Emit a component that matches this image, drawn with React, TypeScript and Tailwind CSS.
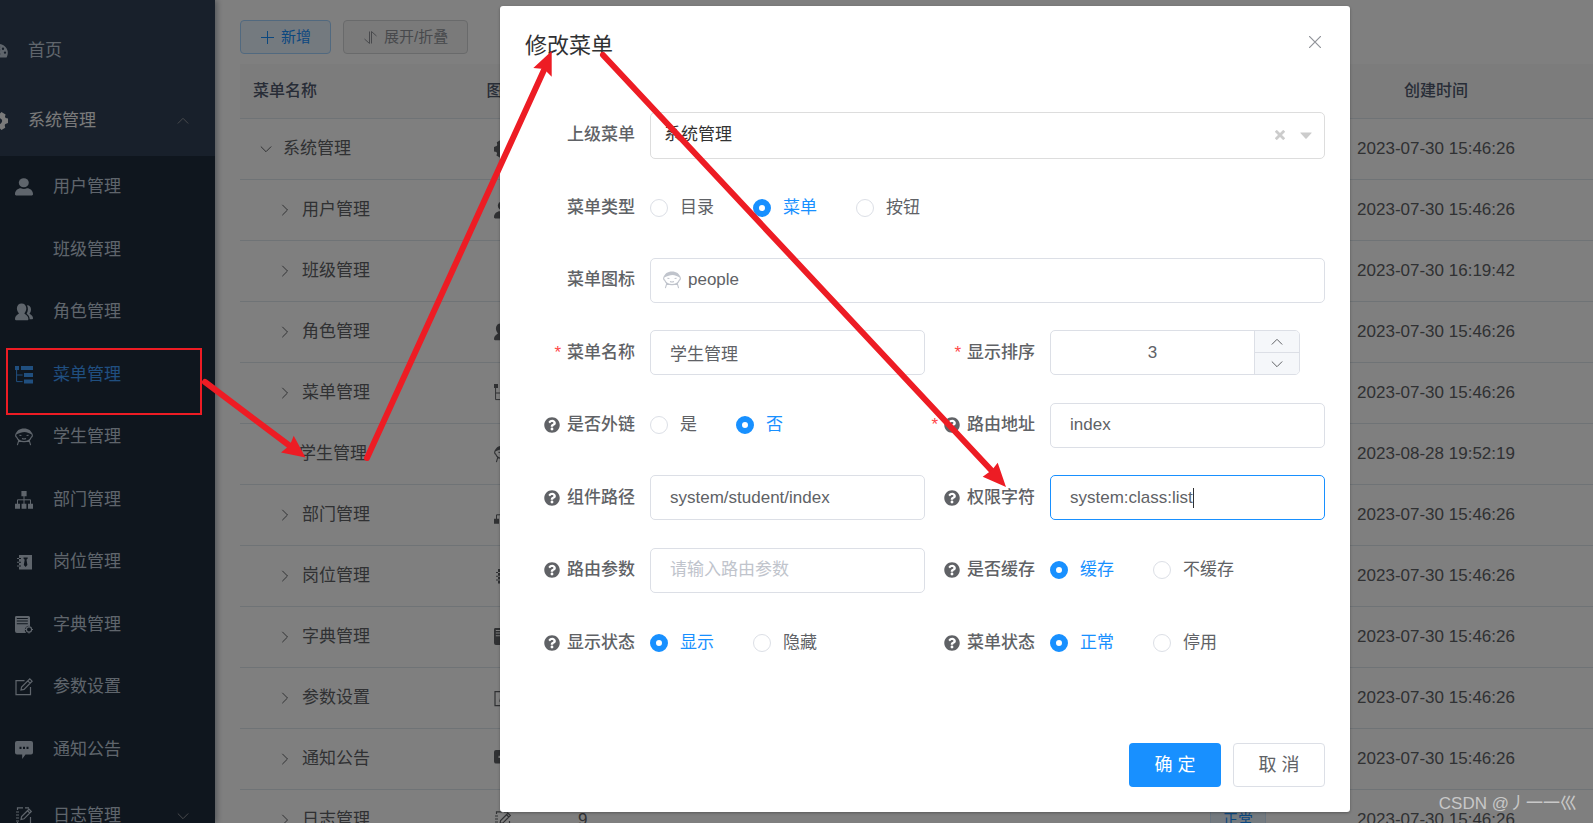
import React, { useState } from 'react';
import { FaQuestionCircle } from 'react-icons/fa';

interface IconProps {
    name: string;
}

const Icon: React.FC<IconProps> = ({ name }) => (
    <svg viewBox="0 0 18 18" className="size-[18px] shrink-0" fill="currentColor" aria-hidden="true">
        {name === 'dashboard' && (
            <path fillRule="evenodd" d="M9 2a9 9 0 0 0-7.6 13.5h15.2A9 9 0 0 0 9 2Zm0 1.8a1.2 1.2 0 1 1 0 2.4 1.2 1.2 0 0 1 0-2.4Zm4 1.8a1.2 1.2 0 1 1 0 2.4 1.2 1.2 0 0 1 0-2.4Zm-8 0A1.2 1.2 0 1 1 5 8a1.2 1.2 0 0 1 0-2.4ZM15 9.400a1.200 1.200 0 1 1 0 2.400 1.200 1.200 0 0 1 0-2.400ZM3 9.400a1.200 1.200 0 1 1 0 2.400 1.200 1.200 0 0 1 0-2.400ZM10.500 7l-1 3.600a1.800 1.800 0 1 1-1-.3Z" />
        )}
        {name === 'system' && (
            <path transform="rotate(30 9 9)" fillRule="evenodd" d="M6.600 0h4.800l.6 2.300 1.300.8 2.300-.7 2.200 3.800L16 8.300v1.400l1.800 2.100-2.200 3.800-2.300-.7-1.300.8-.6 2.300H6.600L6 15.700l-1.300-.8-2.300.7-2.200-3.800L2 9.700V8.300L.2 6.200l2.200-3.800 2.300.7L6 2.300ZM9 6a3 3 0 1 0 0 6 3 3 0 0 0 0-6Z" />
        )}
        {name === 'user' && (
            <>
                <ellipse cx="8.800" cy="4.700" rx="5" ry="4.500" />
                <path d="M0 16c0-3.600 3-5.800 5.800-5.800 1.900 1 4.300 1 6.200 0 3 0 6 2.200 6 5.800 0 1-.4 1.400-1.200 1.400H1.200C.4 17.400 0 17 0 16Z" />
            </>
        )}
        {name === 'peoples' && (
            <>
                <path d="M6.600.4c2.700 0 4.700 2 4.700 4.900 0 2-.8 3.900-1.900 4.900 0 1.200 3.800 1.500 4 5.800 0 .9-.4 1.300-1.200 1.300H1c-.7 0-1-.4-1-1.200.2-4.400 3.800-4.700 3.900-5.900-1.200-1-2-2.900-2-4.900C1.900 2.400 3.900.4 6.600.4Z" />
                <path d="M12 2.300c2.400-.2 4 1.700 4 4.300 0 1.800-.7 3.200-1.500 4 0 .8 3.400 1.400 3.500 4.700 0 .7-.3 1-.9 1h-2.400c-.2-3-1.500-4.300-3.100-5.500 1.500-2.400 1.900-5.800.4-8.500Z" />
            </>
        )}
        {name === 'tree-table' && (
            <>
                <path d="M0 0h4v4H0zM6 0h12v4H6zM9 7h9v4H9zM9 13.500h9v4H9z" />
                <path d="M1.600 4v11.600h6M1.600 9h6" fill="none" stroke="currentColor" strokeWidth="1" />
            </>
        )}
        {name === 'people' && (
            <>
                <path d="M1 6.500C1.200 2.600 4.600.4 9 .4s7.800 2.200 8 6.100C13.500 5 12 4 9.500 4S4.500 5 1 6.500Z" />
                <path d="M2.500 4.500C.2 5.500.2 8.500 1.700 9.200 3 12.400 5.600 13.600 9 13.600s6-1.200 7.300-4.400c1.500-.7 1.500-3.700-.8-4.700M3.700 12.700l-1.300 4.500M14.300 12.700l1.300 4.500M4.400 7.200l2 .3M11.600 7.500l2-.3M7 10.600q2 .9 4 0" fill="none" stroke="currentColor" strokeWidth="1.100" />
            </>
        )}
        {name === 'tree' && (
            <>
                <path d="M6.400 0h5.200v5.200H6.400zM0 12.800h5v5H0zM6.600 12.800h4.800v5H6.600zM13 12.800h5v5h-5z" />
                <path d="M9 5v8M2.500 13V8.800h13V13" fill="none" stroke="currentColor" strokeWidth="1" />
            </>
        )}
        {name === 'post' && (
            <>
                <path fillRule="evenodd" d="M4 2h13v14.500H4V13.500h2v-1H4V9.700h2v-1H4V6h2V5H4ZM8.500 4.500v1l1.200 1.300-.9 5.200 1.800 2 1.800-2-.9-5.200 1.200-1.300v-1Z" />
                <path d="M2 5h2v1H2zM2 8.700h2v1H2zM2 12.500h2v1H2z" />
            </>
        )}
        {name === 'dict' && (
            <>
                <path fillRule="evenodd" d="M1 0h12.500q1.500 0 1.500 1.500V10a4 4 0 0 0-4.500 6L11 17H2q-2 0-2-2V1.500Q0 0 1 0Zm.8 2v1h11V2Zm0 2.600v1h11v-1Zm0 2.600v1h11v-1Z" />
                <circle cx="14" cy="13.500" r="2.600" fill="none" stroke="currentColor" strokeWidth="1.200" />
                <path d="M13.500 9.600h1v1.500h-1zM13.500 16h1v1.500h-1zM9.800 13h1.600v1H9.800zM16.600 13H18v1h-1.400z" />
            </>
        )}
        {name === 'edit' && (
            <path d="M9.500 2.600H1v14h14.500V9M6 12l.6-3L14.800.9l2.300 2.300L9 11.400 6 12ZM12.800 2.900l2.300 2.300" fill="none" stroke="currentColor" strokeWidth="1.200" />
        )}
        {name === 'message' && (
            <path fillRule="evenodd" d="M2 0h14q2 0 2 2v9.500q0 2-2 2h-5.500L7.200 18v-4.500H2q-2 0-2-2V2Q0 0 2 0Zm2.500 5.800v2.100h2V5.800Zm3.500 0v2.100h2V5.800Zm3.500 0v2.100h2V5.800Z" />
        )}
        {name === 'log' && (
            <path d="M8 .8H2.500V3M2.500 15v2h8M10 .8h4M15.500 10v7h-2M1 5h3M1 8h3M1 11h3M1 14h3M6 12.500l.6-3L14 2.200l2.300 2.300L9 11.800l-3 .7ZM12.500 3.700l2.300 2.300" fill="none" stroke="currentColor" strokeWidth="1.200" />
        )}
    </svg>
);

const Chevron: React.FC<{ dir: 'up' | 'down' | 'right' }> = ({ dir }) => (
    <svg viewBox="0 0 12 12" className="size-3 shrink-0" fill="none" stroke="currentColor" strokeWidth="1" aria-hidden="true">
        {dir === 'up' && <path d="M.8 8.500 6 3.300l5.200 5.200" />}
        {dir === 'down' && <path d="M.8 3.500 6 8.700l5.200-5.200" />}
        {dir === 'right' && <path d="M3.300.8 8.500 6l-5.200 5.200" />}
    </svg>
);

const subMenu = [
    { title: '用户管理', icon: 'user' },
    { title: '班级管理', icon: '' },
    { title: '角色管理', icon: 'peoples' },
    { title: '菜单管理', icon: 'tree-table' },
    { title: '学生管理', icon: 'people' },
    { title: '部门管理', icon: 'tree' },
    { title: '岗位管理', icon: 'post' },
    { title: '字典管理', icon: 'dict' },
    { title: '参数设置', icon: 'edit' },
    { title: '通知公告', icon: 'message' },
];

interface MenuRow {
    title: string;
    icon: string;
    sort?: number;
    status?: string;
    time: string;
}

const rows: MenuRow[] = [
    { title: '系统管理', icon: 'system', time: '2023-07-30 15:46:26' },
    { title: '用户管理', icon: 'user', time: '2023-07-30 15:46:26' },
    { title: '班级管理', icon: '', time: '2023-07-30 16:19:42' },
    { title: '角色管理', icon: 'peoples', time: '2023-07-30 15:46:26' },
    { title: '菜单管理', icon: 'tree-table', time: '2023-07-30 15:46:26' },
    { title: '学生管理', icon: 'people', time: '2023-08-28 19:52:19' },
    { title: '部门管理', icon: 'tree', time: '2023-07-30 15:46:26' },
    { title: '岗位管理', icon: 'post', time: '2023-07-30 15:46:26' },
    { title: '字典管理', icon: 'dict', time: '2023-07-30 15:46:26' },
    { title: '参数设置', icon: 'edit', time: '2023-07-30 15:46:26' },
    { title: '通知公告', icon: 'message', time: '2023-07-30 15:46:26' },
    { title: '日志管理', icon: 'log', sort: 9, status: '正常', time: '2023-07-30 15:46:26' },
];

const Sidebar = () => (
    <nav className="z-10 w-[215px] shrink-0 overflow-hidden bg-[#304156] pt-4 text-[#bfcbd9] shadow-[2px_0_6px_rgba(0,21,41,0.35)]">
        <a href="#" className="-ml-[10px] flex h-[70px] items-center gap-5">
            <Icon name="dashboard" />
            首页
        </a>
        <a href="#" className="-ml-[10px] flex h-[70px] items-center gap-5 pr-[26px] text-[#f4f4f5]">
            <Icon name="system" />
            <span className="flex-1">系统管理</span>
            <span className="text-[#909399]"><Chevron dir="up" /></span>
        </a>
        <div className="bg-[#1f2d3d]">
            <div className="grid h-[625px] grid-rows-10">
                {subMenu.map(item => (
                    <a
                        key={item.title}
                        href="#"
                        className={`flex items-center gap-5 pl-[15px] ${item.title === '菜单管理' ? 'text-[#409eff]' : ''}`}
                    >
                        <Icon name={item.icon} />
                        {item.title}
                    </a>
                ))}
            </div>
            <a href="#" className="flex h-[70px] items-center gap-5 pl-[15px] pr-[26px]">
                <Icon name="log" />
                <span className="flex-1">日志管理</span>
                <span className="text-[#909399]"><Chevron dir="down" /></span>
            </a>
        </div>
    </nav>
);

const MenuTable = () => (
    <table className="w-full min-w-[1500px] table-fixed border-separate border-spacing-0">
        <colgroup>
            <col className="w-[200px]" />
            <col className="w-[125px]" />
            <col className="w-[75px]" />
            <col className="w-[557px]" />
            <col className="w-[100px]" />
            <col className="w-[278px]" />
            <col />
        </colgroup>
        <thead>
            <tr className="h-[55px] bg-[#f8f8f9] text-base text-[#515a6e]">
                <th className="border-b border-[#dfe6ec] pl-[13px] text-left font-medium">菜单名称</th>
                <th className="border-b border-[#dfe6ec] font-medium">图标</th>
                <th className="border-b border-[#dfe6ec]" />
                <th className="border-b border-[#dfe6ec]" />
                <th className="border-b border-[#dfe6ec]" />
                <th className="border-b border-[#dfe6ec] font-medium">创建时间</th>
                <th className="border-b border-[#dfe6ec]" />
            </tr>
        </thead>
        <tbody>
            {rows.map((row, i) => (
                <tr key={row.title} className="h-[61px]">
                    <td className="border-b border-[#dfe6ec]">
                        <div className={`flex items-center ${i === 0 ? 'pl-[20px]' : 'pl-[39px]'}`}>
                            {row.title === '学生管理' ? <span className="w-5" /> : <span className="w-[23px]"><Chevron dir={i === 0 ? 'down' : 'right'} /></span>}
                            {row.title}
                        </div>
                    </td>
                    <td className="border-b border-[#dfe6ec]">
                        <div className="flex justify-center"><Icon name={row.icon} /></div>
                    </td>
                    <td className="border-b border-[#dfe6ec] pl-[13px]">{row.sort}</td>
                    <td className="border-b border-[#dfe6ec]" />
                    <td className="border-b border-[#dfe6ec] pl-[13px]">
                        {row.status && (
                            <span className="inline-flex h-[30px] items-center rounded border border-[#d1e9ff] bg-[#e8f4ff] px-3 text-[15px] text-[#1890ff]">{row.status}</span>
                        )}
                    </td>
                    <td className="border-b border-[#dfe6ec] text-center">{row.time}</td>
                    <td className="border-b border-[#dfe6ec]" />
                </tr>
            ))}
        </tbody>
    </table>
);

interface FieldProps {
    label: string;
    htmlFor?: string;
    required?: boolean;
    help?: boolean;
    wide?: boolean;
    children: React.ReactNode;
}

const Field: React.FC<FieldProps> = ({ label, htmlFor, required, help, wide, children }) => (
    <div className={`flex items-center ${wide ? 'col-span-2' : ''}`}>
        <label htmlFor={htmlFor} className="flex w-[125px] shrink-0 items-center justify-end pr-[15px] font-medium">
            {required && <span className="mr-[6px] text-[#ff4949]">*</span>}
            {help && <FaQuestionCircle className="mr-[7px] size-4" />}
            {label}
        </label>
        {children}
    </div>
);

const RadioGroup: React.FC<{ name: string; options: string[]; initial: string }> = ({ name, options, initial }) => {
    const [value, setValue] = useState(initial);

    return (
        <div role="radiogroup" className="flex gap-[39px]">
            {options.map(option => (
                <label key={option} className={`flex items-center gap-3 ${value === option ? 'text-[#1890ff]' : ''}`}>
                    <input
                        type="radio"
                        name={name}
                        checked={value === option}
                        onChange={() => setValue(option)}
                        className="size-[18px] appearance-none rounded-full border border-[#dcdfe6] bg-white checked:border-[6px] checked:border-[#1890ff]"
                    />
                    {option}
                </label>
            ))}
        </div>
    );
};

const inputClass = 'h-[45px] w-full min-w-0 rounded-[5px] border border-[#dcdfe6] bg-white px-[19px] outline-none placeholder:text-[#c0c4cc]';

const EditDialog = () => (
    <div role="dialog" aria-label="修改菜单" className="flex w-[850px] flex-col rounded-[3px] bg-white px-[25px] pb-[25px] shadow-[0_1px_3px_rgba(0,0,0,0.3)]">
        {/* Header */}
        <div className="flex items-start justify-between pt-[25px]">
            <h2 className="text-[22px] leading-[30px] text-[#303133]">修改菜单</h2>
            <button aria-label="关闭" className="p-1 pt-[5px] text-[#909399]">
                <svg viewBox="0 0 12 12" className="size-3" fill="none" stroke="currentColor" strokeWidth="1.200"><path d="M0 0l12 12M12 0 0 12" /></svg>
            </button>
        </div>

        {/* Form */}
        <form className="mt-[38px] grid h-[580px] grid-cols-2 grid-rows-8">
            <Field label="上级菜单" htmlFor="parent" wide>
                <div className="relative flex-1">
                    <select id="parent" className="h-[47px] w-full appearance-none rounded-[5px] border border-[#ddd] bg-white px-[13px] text-[#333] outline-none">
                        <option>系统管理</option>
                    </select>
                    <div className="pointer-events-none absolute inset-y-0 right-[13px] flex items-center gap-[15px] text-[#ccc]">
                        <svg viewBox="0 0 10 10" className="size-[10px]" fill="none" stroke="currentColor" strokeWidth="2.800"><path d="M.8.8l8.400 8.400M9.200.8.8 9.200" /></svg>
                        <svg viewBox="0 0 12 7" className="h-[7px] w-3" fill="currentColor"><path d="M.6.5h10.800q.6.2 0 .8L6.600 6.500q-.6.5-1.200 0L.6 1.300Q0 .7.6.5Z" /></svg>
                    </div>
                </div>
            </Field>
            <Field label="菜单类型" wide>
                <RadioGroup name="type" options={['目录', '菜单', '按钮']} initial="菜单" />
            </Field>
            <Field label="菜单图标" htmlFor="icon" wide>
                <div className="flex h-[45px] flex-1 items-center gap-[7px] rounded-[5px] border border-[#dcdfe6] pl-3">
                    <span className="text-[#c0c4cc]"><Icon name="people" /></span>
                    <input id="icon" defaultValue="people" className="flex-1 outline-none" />
                </div>
            </Field>
            <Field label="菜单名称" htmlFor="name" required>
                <input id="name" defaultValue="学生管理" className={inputClass} />
            </Field>
            <Field label="显示排序" htmlFor="sort" required>
                <div className="flex h-[45px] w-[250px] overflow-hidden rounded-[5px] border border-[#dcdfe6]">
                    <input id="sort" defaultValue="3" className="min-w-0 flex-1 text-center outline-none" />
                    <div className="flex w-[45px] flex-col divide-y divide-[#dcdfe6] border-l border-[#dcdfe6] bg-[#f5f7fa]">
                        <button type="button" aria-label="增加" className="flex flex-1 items-center justify-center"><Chevron dir="up" /></button>
                        <button type="button" aria-label="减少" className="flex flex-1 items-center justify-center"><Chevron dir="down" /></button>
                    </div>
                </div>
            </Field>
            <Field label="是否外链" help>
                <RadioGroup name="frame" options={['是', '否']} initial="否" />
            </Field>
            <Field label="路由地址" htmlFor="path" required help>
                <input id="path" defaultValue="index" className={inputClass} />
            </Field>
            <Field label="组件路径" htmlFor="component" help>
                <input id="component" defaultValue="system/student/index" className={inputClass} />
            </Field>
            <Field label="权限字符" htmlFor="perms" help>
                <div className="flex h-[45px] flex-1 items-center rounded-[5px] border border-[#1890ff] pl-[19px]">
                    <input id="perms" defaultValue="system:class:list" className="field-sizing-content outline-none" />
                    <span className="h-5 w-px bg-[#303133]" />
                </div>
            </Field>
            <Field label="路由参数" htmlFor="query" help>
                <input id="query" placeholder="请输入路由参数" className={inputClass} />
            </Field>
            <Field label="是否缓存" help>
                <RadioGroup name="cache" options={['缓存', '不缓存']} initial="缓存" />
            </Field>
            <Field label="显示状态" help>
                <RadioGroup name="visible" options={['显示', '隐藏']} initial="显示" />
            </Field>
            <Field label="菜单状态" help>
                <RadioGroup name="status" options={['正常', '停用']} initial="正常" />
            </Field>
        </form>

        {/* Footer */}
        <div className="mt-16 flex justify-end gap-3">
            <button className="h-11 w-[92px] rounded bg-[#1890ff] text-lg text-white">确 定</button>
            <button className="h-11 w-[92px] rounded border border-[#dcdfe6] bg-white text-lg">取 消</button>
        </div>
    </div>
);

// Red guide arrows: menu entry -> table row -> dialog title -> permission field
const Annotations = () => (
    <svg className="pointer-events-none absolute left-0 top-0 z-30 h-[823px] w-[1593px]" fill="none" stroke="#ed1c24" strokeWidth="6" strokeLinecap="round" aria-hidden="true">
        <rect x="7" y="349" width="194" height="65" strokeWidth="2" />
        <path d="M205 382 290 446M367 458 544 70M603 55 992 471" />
        <g fill="#ed1c24" stroke="none">
            <path d="M305.500 457.500 293.700 435.700 290 445 281 452.500Z" />
            <path d="M551.700 51 533.300 68 544 69 551.700 76.700Z" />
            <path d="M1006 487 997.700 462.700 992 470 982.700 476.700Z" />
        </g>
    </svg>
);

export default function App() {
    return (
        <div className="relative flex h-screen overflow-hidden bg-white font-['Liberation_Sans','Noto_Sans_CJK_SC',sans-serif] text-[17px] leading-6 text-[#606266]">
            <Sidebar />

            {/* Page content */}
            <main className="min-w-0 flex-1 overflow-hidden pl-[25px] pt-5">
                <div className="mb-[10px] flex gap-3 text-[15px]">
                    <button className="flex h-[34px] items-center gap-[6px] rounded border border-[#a3d3ff] bg-[#e8f4ff] px-[19px] text-[#1890ff]">
                        <svg viewBox="0 0 15 15" className="size-[15px]" fill="none" stroke="currentColor"><path d="M7.500 1v13M1 7.500h13" /></svg>
                        新增
                    </button>
                    <button className="flex h-[34px] items-center gap-[6px] rounded border border-[#d3d4d6] bg-[#f4f4f5] px-[19px] text-[#909399]">
                        <svg viewBox="0 0 15 15" className="size-[15px]" fill="none" stroke="currentColor"><path d="M6.500 1.500v12L1.500 9M8.500 13.500v-12L13.500 6" /></svg>
                        展开/折叠
                    </button>
                </div>
                <MenuTable />
            </main>

            {/* Mask and dialog */}
            <div className="absolute inset-0 z-20 flex items-start justify-center bg-black/50 pl-[257px] pt-[6px]">
                <EditDialog />
            </div>

            <Annotations />
            <p className="absolute bottom-[7px] right-4 z-30 text-[#c8c8c8]">CSDN @丿一一巛</p>
        </div>
    );
}
